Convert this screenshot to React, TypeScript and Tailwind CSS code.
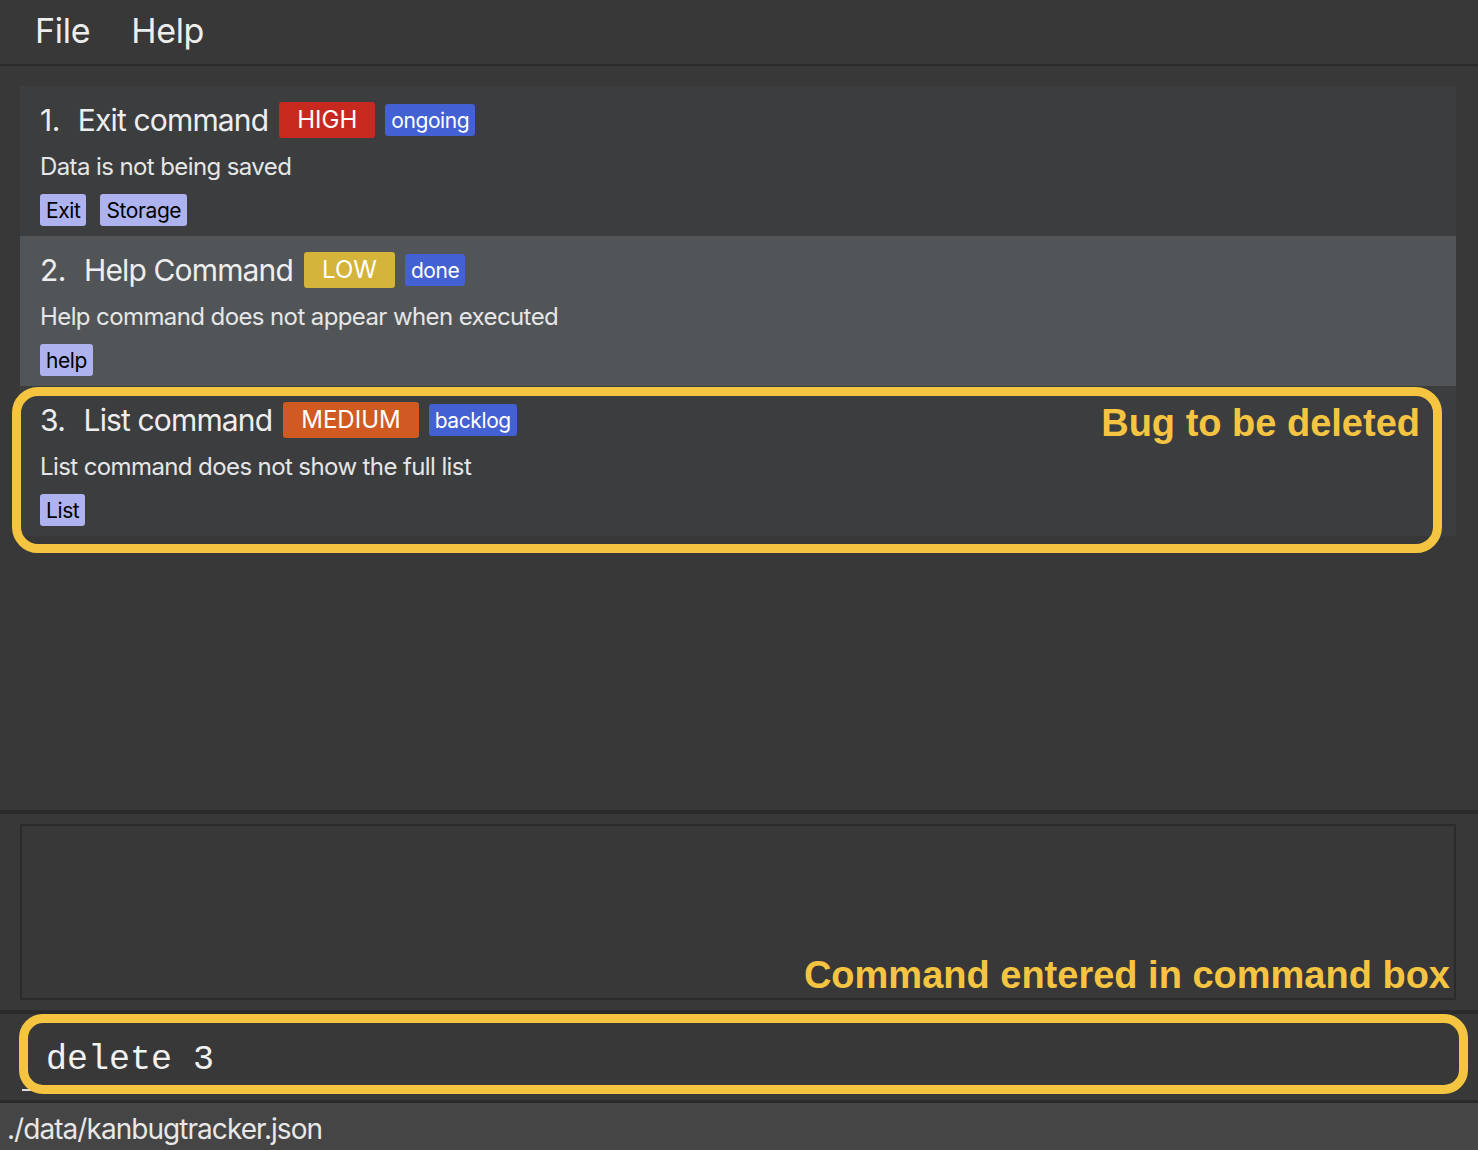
import React from "react";

type Bug = {
  id: number;
  name: string;
  priority: string;
  priorityClass: string;
  state: string;
  desc: string;
  tags: string[];
  bg: string;
};

const bugs: Bug[] = [
  {
    id: 1,
    name: "Exit command",
    priority: "HIGH",
    priorityClass: "bg-[#c8291f] px-[18px]",
    state: "ongoing",
    desc: "Data is not being saved",
    tags: ["Exit", "Storage"],
    bg: "bg-[#3c3d3f]",
  },
  {
    id: 2,
    name: "Help Command",
    priority: "LOW",
    priorityClass: "bg-[#d4b43a] px-[18px]",
    state: "done",
    desc: "Help command does not appear when executed",
    tags: ["help"],
    bg: "bg-[#515558]",
  },
  {
    id: 3,
    name: "List command",
    priority: "MEDIUM",
    priorityClass: "bg-[#d05a22] px-[18px]",
    state: "backlog",
    desc: "List command does not show the full list",
    tags: ["List"],
    bg: "bg-[#3c3d3f]",
  },
];

const ui = { fontFamily: "Inter, 'Noto Sans', sans-serif" };
const annot = { fontFamily: "'Liberation Sans', Arial, sans-serif" };

function BugCard({ bug, highlight }: { bug: Bug; highlight?: boolean }) {
  return (
    <div className={`relative ${bug.bg} pl-[20px] pt-[16px] pb-[10px] h-[150px]`}>
      <div className="flex items-center h-[36px]">
        <span className="text-[30px] text-[#eeeeee] tracking-[-0.5px] leading-none">
          {bug.id}.
        </span>
        <span className="ml-[18px] text-[30px] text-[#eeeeee] tracking-[-0.85px] leading-none">
          {bug.name}
        </span>
        <span
          className={`ml-[11px] h-[36px] flex items-center rounded-[3px] text-white text-[24px] leading-none ${bug.priorityClass}`}
        >
          {bug.priority}
        </span>
        <span className="ml-[10px] h-[32px] flex items-center rounded-[3px] bg-[#4361d3] px-[6px] text-white text-[21px] leading-none tracking-[-0.4px]">
          {bug.state}
        </span>
      </div>
      <div className="mt-[12px] h-[34px] flex items-center text-[24px] text-[#e6e6e6] tracking-[-0.6px] leading-none">
        {bug.desc}
      </div>
      <div className="mt-[10px] flex gap-[14px]">
        {bug.tags.map((t) => (
          <span
            key={t}
            className="h-[32px] flex items-center rounded-[3px] bg-[#aeb3ef] px-[6px] text-black text-[21px] leading-none tracking-[-0.4px]"
          >
            {t}
          </span>
        ))}
      </div>
      {highlight && (
        <>
          <div className="absolute left-[-8px] top-[1px] w-[1430px] h-[166px] border-[9px] border-[#f5c542] rounded-[26px] pointer-events-none" />
          <div
            className="absolute right-[36px] top-[18px] text-[38px] leading-[38px] font-bold text-[#f5c542]"
            style={annot}
          >
            Bug to be deleted
          </div>
        </>
      )}
    </div>
  );
}

export default function App() {
  return (
    <div className="w-[1478px] h-[1150px] flex flex-col bg-[#383838] overflow-hidden" style={ui}>
      {/* Menu bar */}
      <div className="h-[66px] shrink-0 flex items-center pb-[4px] border-b-2 border-[#2b2b2b] bg-[#383838] text-[#eeeeee] text-[34px] tracking-[-0.3px]">
        <span className="ml-[35px]">File</span>
        <span className="ml-[41px]">Help</span>
      </div>

      {/* Bug list */}
      <div className="h-[744px] shrink-0 pt-[20px] pl-[20px] pr-[22px]">
        {bugs.map((b) => (
          <BugCard key={b.id} bug={b} highlight={b.id === 3} />
        ))}
      </div>

      {/* divider */}
      <div className="h-[4px] shrink-0 bg-[#2b2b2b]" />

      {/* Result display */}
      <div className="h-[196px] shrink-0 pt-[10px] pl-[20px] pr-[22px]">
        <div className="relative h-[176px] border-2 border-[#2b2b2b] bg-[#383838]">
          <div
            className="absolute right-[4px] top-[130px] text-[38px] leading-[38px] font-bold text-[#f5c542] whitespace-nowrap"
            style={annot}
          >
            Command entered in command box
          </div>
        </div>
      </div>

      {/* divider */}
      <div className="h-[4px] shrink-0 bg-[#2b2b2b]" />

      {/* Command box */}
      <div className="relative h-[86px] shrink-0 bg-[#383838]">
        <div className="absolute left-[22px] top-[75px] w-[12px] h-[2px] bg-[#dddddd]" />
        <div className="absolute left-[19px] top-0 w-[1449px] h-[80px] border-[9px] border-[#f5c542] rounded-[24px] flex items-center">
          <span
            className="ml-[18px] mt-[12px] text-[35px] leading-none text-[#f2f2f2]"
            style={{ fontFamily: "'Liberation Mono', 'Courier New', monospace" }}
          >
            delete 3
          </span>
        </div>
      </div>

      {/* divider */}
      <div className="h-[3px] shrink-0 bg-[#2b2b2b]" />

      {/* Status bar */}
      <div className="flex-1 bg-[#454545] flex items-center pl-[7px] pt-[4px] text-[28px] text-[#e8e8e8] tracking-[-0.95px]">
        ./data/kanbugtracker.json
      </div>
    </div>
  );
}
